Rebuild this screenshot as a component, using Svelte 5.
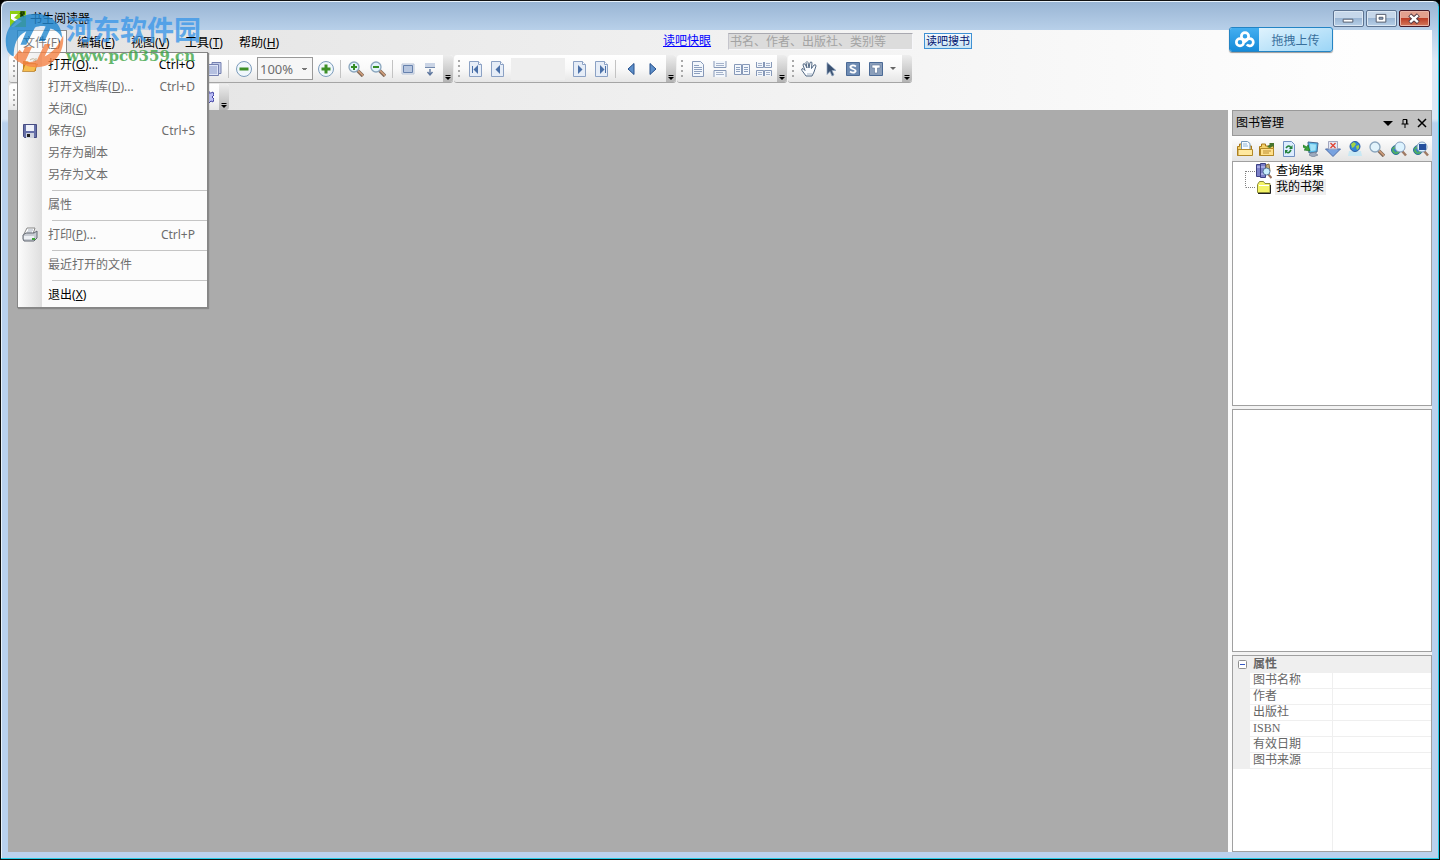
<script lang="ts">
  interface MenuEntry {
    text?: string;
    key?: string;
    tail?: string;
    shortcut?: string;
    icon?: string;
    enabled?: boolean;
    separator?: boolean;
  }

  const menus = [
    { text: "文件", key: "F" },
    { text: "编辑", key: "E" },
    { text: "视图", key: "V" },
    { text: "工具", key: "T" },
    { text: "帮助", key: "H" },
  ];

  const fileMenu: MenuEntry[] = [
    { text: "打开", key: "O", tail: "...", shortcut: "Ctrl+O", icon: "open", enabled: true },
    { text: "打开文档库", key: "D", tail: "...", shortcut: "Ctrl+D" },
    { text: "关闭", key: "C" },
    { text: "保存", key: "S", shortcut: "Ctrl+S", icon: "save" },
    { text: "另存为副本" },
    { text: "另存为文本" },
    { separator: true },
    { text: "属性" },
    { separator: true },
    { text: "打印", key: "P", tail: "...", shortcut: "Ctrl+P", icon: "print" },
    { separator: true },
    { text: "最近打开的文件" },
    { separator: true },
    { text: "退出", key: "X", enabled: true },
  ];

  const fileTools = ["open", "save", "print", "page", "page", "page", "page", "page"];
  const layoutTools = ["page", "continuous", "facing", "grid"];
  const panelTools = ["shelf", "newshelf", "refresh", "import", "download", "globe", "find", "findweb", "findlocal"];
  const fields = ["图书名称", "作者", "出版社", "ISBN", "有效日期", "图书来源"];

  let openMenu = $state("F");
  let expanded = $state(true);
  let keyword = $state("");
  let zoom = $state("100%");
  let page = $state("");
</script>

{#snippet label(item: { text?: string; key?: string; tail?: string })}
  {item.text}{#if item.key}(<u>{item.key}</u>){/if}{item.tail ?? ""}
{/snippet}

{#snippet icon(name: string)}
  <svg class="icon" viewBox="0 0 16 16" aria-hidden="true">
    {#if name === "open"}
      <path d="M1 4h5l1 2h7v8H1z" fill="#c98a25" />
      <path d="M3 7h12.5l-3 7.5H.5z" fill="#f6bd4f" stroke="#a86a12" stroke-width=".6" />
      <path d="M4 8h9" stroke="#fff0bd" />
      <path d="M8 3q4-3 6 1M14 1v3h-3" fill="none" stroke="#8c7442" />
    {:else if name === "save"}
      <path d="M1.5 1.5h13v13h-12l-1-1z" fill="#6670a8" stroke="#464c82" />
      <path d="M4 2h8v6H4z" fill="#eef1fa" />
      <path d="M4 10h8v5H4z" fill="#cdd2df" />
      <path d="M5 11h3v3H5z" fill="#222" />
    {:else if name === "print"}
      <path d="M5 1h8l-2 6H2z" fill="#fff" stroke="#888" />
      <path d="M6 3h5M5 5h5" stroke="#a5aebc" />
      <path d="M1 8l3-2h8l3-2v7l-3 3H2l-1-2z" fill="#c8ccd3" stroke="#626872" />
      <path d="M2 9h10v3H2z" fill="#edf0f4" />
      <path d="M10 11h3v2h-3z" fill="#3fa43a" />
    {:else if name === "copy"}
      <path d="M6 1.5h9v11H6z" fill="#c3cce8" stroke="#7580b0" />
      <path d="M1.5 3.5h11v11h-11z" fill="#dfe5f6" stroke="#7580b0" />
      <path d="M3 6h8M3 8h8M3 10h8M3 12h8" stroke="#8b9bca" />
    {:else if name === "minus" || name === "plus"}
      <circle cx="8" cy="8" r="7.5" fill="#f0f7fc" stroke="#7c9cbc" />
      <path d="M3.5 6.5h9v3h-9z" fill="#3d8f27" />
      {#if name === "plus"}<path d="M6.5 3.5h3v9h-3z" fill="#3d8f27" />{/if}
    {:else if name === "zoomin" || name === "zoomout" || name === "find"}
      <path d="M9 9l6 6" stroke="#826a59" stroke-width="3.5" />
      <path d="M9.5 9l5.5 5.500" stroke="#d4a07c" stroke-width="1.5" />
      <circle cx="6" cy="6" r="5" fill="#e2f3fb" stroke="#8ba6be" stroke-width="1.3" />
      {#if name !== "find"}<path d="M3 5h6v2H3z" fill="#358d26" />{/if}
      {#if name === "zoomin"}<path d="M5 3h2v6H5z" fill="#358d26" />{/if}
    {:else if name === "screen"}
      <path d="M2 3h12v10H2z" fill="#e5ebf4" stroke="#b8c3d6" />
      <path d="M3.5 4.500h9v7h-9z" fill="#b7c6df" stroke="#6681ad" />
    {:else if name === "fit"}
      <path d="M3 2h10v4H3z" fill="#cad4e5" />
      <path d="M3 6.500h10" stroke="#7188ac" />
      <path d="M8 8v6M5.500 11L8 14l2.500-3" fill="none" stroke="#5e779f" stroke-width="1.4" />
    {:else if name === "first" || name === "prev" || name === "next" || name === "last"}
      <path d="M2.500 .5h9l3 3v12h-12z" fill="#e6edf7" stroke="#8ba1c4" />
      <path d="M11.500 .5v3h3" fill="#fff" stroke="#8ba1c4" />
      {#if name === "first" || name === "prev"}
        <path d="M11 4v9L6.500 8.500z" fill="#4a70a8" />
      {:else}
        <path d="M7 4v9l4.500-4.500z" fill="#4a70a8" />
      {/if}
      {#if name === "first"}<path d="M5.500 5v7" stroke="#4a70a8" />{/if}
      {#if name === "last"}<path d="M12.500 5v7" stroke="#4a70a8" />{/if}
    {:else if name === "back"}
      <path d="M11 2.500v11L5 8z" fill="#5d8fc9" stroke="#26508d" />
    {:else if name === "forward"}
      <path d="M5 2.500v11L11 8z" fill="#5d8fc9" stroke="#26508d" />
    {:else if name === "page"}
      <path d="M2.500 .5h8l3 3v12h-11z" fill="#f3f7fc" stroke="#8799b8" />
      <path d="M4 4.500h5M4 6.500h8M4 8.500h8M4 10.500h8M4 12.500h6" stroke="#8da0bf" />
    {:else if name === "continuous"}
      <path d="M2 0v6.500h12V0M2 16V9.500h12V16" fill="#f3f7fc" stroke="#8799b8" />
      <path d="M4 2.500h8M4 4.500h8M4 11.500h7M4 13.500h8" stroke="#a4b2ca" />
    {:else if name === "facing"}
      <path d="M.5 3.500h7v10h-7zM8.500 3.500h7v10h-7z" fill="#f3f7fc" stroke="#8799b8" />
      <path d="M2 6.500h4M2 8.500h4M2 10.500h4M10 6.500h4M10 8.500h4M10 10.500h4" stroke="#8da0bf" />
    {:else if name === "grid"}
      <path d="M.5 1v5.500h7V1M8.500 1v5.500h7V1M.5 15V9.500h7V15M8.500 15V9.500h7V15" fill="#f3f7fc" stroke="#8799b8" />
      <path d="M2 2.500h4M2 4.500h4M10 2.500h4M10 4.500h4M2 11.500h4M2 13.500h4M10 11.500h4M10 13.500h4" stroke="#a4b2ca" />
    {:else if name === "hand"}
      <path d="M5 15L1 9.500q-1-2 1-2l2 2-2-5.500q0-2 2-1l2 4-1-5.500q1-2 2 0l1 5.500 1-5.500q1-1 2 0l-.5 6L13 4q2-1 2 1l-2 6-2 4z" fill="#fafcff" stroke="#526883" />
      <path d="M6 13h5" stroke="#a7b7c9" />
    {:else if name === "arrow"}
      <path d="M4 1.500v12l3-3 2 4.500 2-1-2-4.500h4z" fill="#3b5272" stroke="#8fa5c0" stroke-width=".7" />
    {:else if name === "select" || name === "textselect"}
      <path d="M1.500 1.500h13v13h-13z" fill={name === "select" ? "#6e8bb3" : "#8b9fbb"} stroke="#4b6a96" />
      {#if name === "select"}
        <path d="M11 5.500Q8 3.500 6 5t2 3 2 3-5-.5" fill="none" stroke="#fff" stroke-width="1.8" />
      {:else}
        <path d="M4 4h8v3h-2.500v5h-3V7H4z" fill="#fff" stroke="#5b7499" stroke-width=".6" />
      {/if}
    {:else if name === "gear"}
      <path d="M8 2h3v2h2l2-1 1 3-2 2 2 2-1 3-2-1-2 2H8z" fill="#babdf4" stroke="#4446a6" />
    {:else if name === "shelf" || name === "newshelf"}
      <path d="M.5 5.500h2V3h4v2h8v9.500H.5z" fill="#f4d169" stroke="#a97818" />
      {#if name === "shelf"}
        <path d="M4.500 .5h6l2.500 2V9H4.500z" fill="#f4faff" stroke="#7396b4" />
        <path d="M6 3h4M6 5h5" stroke="#91b6d6" />
        <path d="M1 8.500h14.500v6H1z" fill="#ffe9a0" stroke="#b38928" />
      {:else}
        <path d="M1.500 7.500h13v7h-13z" fill="#ffe08b" stroke="#b38928" />
        <path d="M8 6l3-3-1-1h5v5l-1-2-3 2z" fill="#46742c" />
        <path d="M4 10h8M4 12h6" stroke="#bb8d35" />
      {/if}
    {:else if name === "refresh"}
      <path d="M2.500 .5h8l3 3v12h-11z" fill="#dcecff" stroke="#708fc0" />
      <path d="M5 7q3-4 5 0M10 9q-3 5-5 1" fill="none" stroke="#25823b" stroke-width="1.6" />
      <path d="M11.500 4v4H8zM4 13V9h3z" fill="#25823b" />
    {:else if name === "import"}
      <path d="M5 1l10 1-1 9-8 1z" fill="#59b9e6" stroke="#466891" />
      <path d="M7 3l6 .5-.5 6-5 .5z" fill="#a2e3f8" />
      <path d="M8 12l5-1v2l2 1-5 2-4-2z" fill="#9daabe" stroke="#67758b" stroke-width=".6" />
      <path d="M0 4l4 2 1-2 2 6-6-1 2-1-3-2z" fill="#39a438" stroke="#176b1c" stroke-width=".6" />
    {:else if name === "download"}
      <path d="M4 .5h8V8h3.500L8 15.500.5 8H4z" fill="#78a2df" stroke="#4d6da8" />
      <path d="M3.500 .5h9V8h-9z" fill="#e4e8f5" stroke="#a4a6bd" />
      <path d="M5.500 2l5 5M10.500 2l-5 5" stroke="#e04230" stroke-width="1.3" />
    {:else if name === "globe"}
      <path d="M2 10h12l1 5H1z" fill="#c8e8f4" />
      <circle cx="8" cy="5.500" r="5" fill="#3286d4" stroke="#285aa0" />
      <path d="M4 3l3-2 2 2-2 3-2 1zM9 5l3-1v3l-2 2z" fill="#a4d445" />
    {:else if name === "findweb" || name === "findlocal"}
      <circle cx="5" cy="9" r="4.500" fill="#4db061" stroke="#2d6ca1" />
      <path d="M2 8h4l-1 4z" fill="#397fce" />
      <path d="M11 10l4 4.500" stroke="#9f7a64" stroke-width="2.500" />
      <circle cx="9" cy="6" r="5" fill="#dcf3ff" stroke="#839dbd" />
      {#if name === "findlocal"}<path d="M6 3h7v6H6z" fill="#244f9d" />{/if}
    {:else if name === "results"}
      <path d="M.5 1.500h4v12h-4zM4.500 .5h5v14h-5z" fill="#7b80c8" stroke="#3e4285" />
      <path d="M1 4h3M5 4h4M5 11h4" stroke="#d2d4ff" />
      <path d="M10 2l3-1 1 7-4 3z" fill="#c9b27b" stroke="#887347" />
      <path d="M12 11l3.500 4" stroke="#99715a" stroke-width="2" />
      <circle cx="10.500" cy="8.500" r="3.500" fill="#c9effd" stroke="#55779a" />
    {:else if name === "folder"}
      <path d="M1.500 5.500l2-3h4l1.500 2h5v9H1.500z" fill="#f4f468" stroke="#8b8b38" />
      <path d="M3 6.500h10" stroke="#fff" />
      <path d="M2 14.500h12.500V6" fill="none" stroke="#222" />
    {/if}
  </svg>
{/snippet}

{#snippet tool(name: string)}
  <button class="tool" aria-label={name}>{@render icon(name)}</button>
{/snippet}

{#snippet grip()}
  <span class="grip"><i></i><i></i><i></i><i></i></span>
{/snippet}

{#snippet overflow()}
  <button class="overflow" aria-label="more">
    <svg viewBox="0 0 8 8" aria-hidden="true"><path d="M1.500 2.500h5" stroke="#000" /><path d="M1 4h6L4 7z" fill="#000" /></svg>
  </button>
{/snippet}

<div class="window">
  <header class="titlebar">
    <svg class="app-icon" viewBox="0 0 16 16" aria-hidden="true">
      <path d="M0 0h16v16H0z" fill="#8fce13" />
      <path d="M1 3h7L4 7l8 3-8 6H1l5-5-5-3z" fill="#fff" />
      <path d="M11 6V1h3v2h-3l3 3" fill="none" stroke="#173800" stroke-width="1.5" />
    </svg>
    <h1>书生阅读器</h1>
    <div class="window-buttons">
      <button aria-label="最小化">
        <svg viewBox="0 0 30 16" aria-hidden="true"><path d="M9.500 8.500h10v3h-10z" fill="#fff" stroke="#535b6d" /></svg>
      </button>
      <button aria-label="还原">
        <svg viewBox="0 0 30 16" aria-hidden="true">
          <path d="M9.500 3.500h10v8h-10z" fill="#fff" stroke="#535b6d" />
          <path d="M12.500 6.500h4v2h-4z" fill="#8ca8ca" stroke="#535b6d" />
        </svg>
      </button>
      <button class="close" aria-label="关闭">
        <svg viewBox="0 0 30 16" aria-hidden="true">
          <path d="M10 4l9 8M19 4l-9 8" stroke="#563b45" stroke-width="4.500" />
          <path d="M10.500 4.500l8 7M18.500 4.500l-8 7" stroke="#fff" stroke-width="2.500" />
        </svg>
      </button>
    </div>
  </header>

  <div class="client">
    <div class="menubar">
      <nav class="menus">
        {#each menus as menu}
          <div class="menu">
            <button
              class="menu-title"
              class:open={openMenu === menu.key}
              onclick={() => (openMenu = openMenu === menu.key ? "" : menu.key)}
            >{@render label(menu)}</button>
            {#if menu.key === "F" && openMenu === "F"}
              <div class="dropdown">
                {#each fileMenu as item}
                  {#if item.separator}
                    <hr />
                  {:else}
                    <button class="entry" disabled={!item.enabled}>
                      <span class="entry-icon">{#if item.icon}{@render icon(item.icon)}{/if}</span>
                      <span class="entry-label">{@render label(item)}</span>
                      <span>{item.shortcut ?? ""}</span>
                    </button>
                  {/if}
                {/each}
              </div>
            {/if}
          </div>
        {/each}
      </nav>
      <form class="search" onsubmit={(e) => e.preventDefault()}>
        <a href="#duba">读吧快眼</a>
        <input type="text" bind:value={keyword} placeholder="书名、作者、出版社、类别等" aria-label="搜书" />
        <button>读吧搜书</button>
      </form>
    </div>

    <div class="toolrow">
      <div class="toolbar">
        {@render grip()}
        {#each fileTools as name}{@render tool(name)}{/each}
        <span class="divider"></span>
        {@render tool("copy")}
        <span class="divider"></span>
        {@render tool("minus")}
        <select class="zoom" bind:value={zoom} aria-label="缩放">
          <option>100%</option>
          <option>150%</option>
          <option>200%</option>
        </select>
        {@render tool("plus")}
        <span class="divider"></span>
        {@render tool("zoomin")}
        {@render tool("zoomout")}
        <span class="divider"></span>
        {@render tool("screen")}
        {@render tool("fit")}
        {@render overflow()}
      </div>
      <div class="toolbar">
        {@render grip()}
        {@render tool("first")}
        {@render tool("prev")}
        <input class="page-number" type="text" bind:value={page} aria-label="页码" />
        {@render tool("next")}
        {@render tool("last")}
        <span class="divider"></span>
        {@render tool("back")}
        {@render tool("forward")}
        {@render overflow()}
      </div>
      <div class="toolbar">
        {@render grip()}
        {#each layoutTools as name}{@render tool(name)}{/each}
        {@render overflow()}
      </div>
      <div class="toolbar">
        {@render grip()}
        {@render tool("hand")}
        {@render tool("arrow")}
        {@render tool("select")}
        <button class="tool split" aria-label="textselect">
          {@render icon("textselect")}
          <svg class="caret" viewBox="0 0 6 4" aria-hidden="true"><path d="M0 0h6L3 3z" fill="#666" /></svg>
        </button>
        {@render overflow()}
      </div>
    </div>

    <div class="toolrow">
      <div class="toolbar">
        {@render grip()}
        {#each fileTools as name}{@render tool(name)}{/each}
        {@render tool("gear")}
        {@render overflow()}
      </div>
    </div>

    <div class="workspace">
      <main></main>
      <aside>
        <div class="panel-head">
          <h2>图书管理</h2>
          <button aria-label="菜单"><svg viewBox="0 0 10 10" aria-hidden="true"><path d="M0 3h10L5 8z" fill="#000" /></svg></button>
          <button aria-label="固定">
            <svg viewBox="0 0 10 10" aria-hidden="true"><path d="M3 6V1.500h4V6M1.500 6h7M5 6v4M6.500 1v5" fill="none" stroke="#000" /></svg>
          </button>
          <button aria-label="关闭面板">
            <svg viewBox="0 0 10 10" aria-hidden="true"><path d="M1 1l8 8M9 1L1 9" stroke="#000" stroke-width="1.5" /></svg>
          </button>
        </div>
        <div class="panel-tools">
          {#each panelTools as name}{@render tool(name)}{/each}
        </div>
        <div class="box tree">
          <svg class="branches" viewBox="0 0 11 32" aria-hidden="true">
            <path d="M.5 8V24.500M1 8.500h10M1 24.500h10" fill="none" stroke="#808080" stroke-dasharray="1 1" />
          </svg>
          <ul>
            <li>{@render icon("results")}<span>查询结果</span></li>
            <li>{@render icon("folder")}<span class="selected">我的书架</span></li>
          </ul>
        </div>
        <div class="box"></div>
        <div class="box properties">
          <table>
            <colgroup>
              <col class="gutter-col" />
              <col class="name-col" />
              <col />
            </colgroup>
            <thead>
              <tr>
                <th class="gutter">
                  <button aria-label="折叠" onclick={() => (expanded = !expanded)}>
                    <svg viewBox="0 0 9 9" aria-hidden="true">
                      <rect x=".5" y=".5" width="8" height="8" rx="1" fill="#fff" stroke="#909090" />
                      <path d="M2 4.500h5" stroke="#3457c4" />
                    </svg>
                  </button>
                </th>
                <th colspan="2">属性</th>
              </tr>
            </thead>
            <tbody>
              {#if expanded}
                {#each fields as field}
                  <tr>
                    <td class="gutter"></td>
                    <td class="name">{field}</td>
                    <td class="value"></td>
                  </tr>
                {/each}
              {/if}
              <tr class="rest">
                <td colspan="2"></td>
                <td></td>
              </tr>
            </tbody>
          </table>
        </div>
      </aside>
    </div>
  </div>

  <button class="upload">
    <span class="upload-logo">
      <svg viewBox="0 0 22 18" aria-hidden="true">
        <g fill="none" stroke="#fff" stroke-width="3">
          <circle cx="11" cy="5.500" r="4" />
          <circle cx="5.500" cy="12" r="4" />
          <path d="M13 14.500a4 4 0 1 0 0-5L10 12" />
        </g>
      </svg>
    </span>
    <span class="upload-text">拖拽上传</span>
  </button>

  <div class="watermark">
    <svg viewBox="0 0 64 64" aria-hidden="true">
      <ellipse cx="31" cy="33" rx="26" ry="25" fill="#fff" opacity=".6" />
      <path d="M3 42C-3 20 14 4 34 5c15 1 26 11 26 25-3-6-8-9-12-10l-6 13h-6l7-15c-4-1-8 0-11 1l-9 18h-6l6-14C13 28 10 37 10 49c-3-1-6-4-7-7z" fill="#2288cf" />
      <path d="M61 27c2 17-9 33-28 33-8 0-14-2-18-6l7-15h7l-7 15c4 1 8 1 12-1l8-17h6l-6 13c9-5 15-12 19-22z" fill="#f58245" />
      <path d="M16 42l-6 8 5 5 5-9z" fill="#f58245" />
    </svg>
    <div>
      <strong>河东软件园</strong>
      <em>www.pc0359.cn</em>
    </div>
  </div>
</div>

<style>
  :global(body) {
    margin: 0;
    background: #000;
  }

  .window {
    position: relative;
    box-sizing: border-box;
    height: 100vh;
    padding: 0 7px 7px;
    display: flex;
    flex-direction: column;
    border: 1px solid #111;
    border-radius: 7px 7px 0 0;
    background: linear-gradient(#98b4d3, #b9d1ea 30px, #dce8f6 60px, #dce8f6 118px, #b9d1ee 122px);
    box-shadow: inset -1px -1px #23cce8, inset 1px 1px #e8f2fb;
    font: 12px/16px "Noto Sans", "Noto Sans CJK SC", sans-serif;
    color: #000;
  }

  button,
  input,
  select {
    box-sizing: border-box;
    margin: 0;
    padding: 0;
    border: 0;
    background: none;
    font: inherit;
    color: inherit;
  }

  svg {
    display: block;
  }

  .icon {
    width: 16px;
    height: 16px;
    flex: none;
  }

  h1,
  h2 {
    margin: 0;
    font-size: 12px;
    font-weight: 400;
  }

  .titlebar {
    height: 29px;
    flex: none;
    display: flex;
    align-items: center;
    gap: 4px;
    padding: 6px 2px 0;
    box-sizing: border-box;
  }

  .app-icon {
    width: 16px;
    height: 16px;
  }

  .window-buttons {
    margin-left: auto;
    display: flex;
    gap: 2px;
  }

  .window-buttons button {
    width: 31px;
    height: 17px;
    border: 1px solid #5d7391;
    border-radius: 2px;
    background: linear-gradient(#c6d7ea 45%, #9bb6d4 50%, #b8d0e8);
    box-shadow: inset 0 0 0 1px #dce8f4;
  }

  .window-buttons .close {
    border-color: #451827;
    background: linear-gradient(#e3a08e 45%, #bd3e27 50%, #d3795c);
    box-shadow: inset 0 0 0 1px #e9b4a7;
  }

  .client {
    flex: 1;
    min-height: 0;
    display: flex;
    flex-direction: column;
    background: linear-gradient(90deg, #e2e2e2, #fefefe 95%);
  }

  .menubar {
    height: 25px;
    flex: none;
    display: flex;
  }

  .menus {
    flex: 0 0 46%;
    box-sizing: border-box;
    display: flex;
    padding-left: 9px;
  }

  .menu {
    position: relative;
    min-width: 54px;
  }

  .menu-title {
    height: 24px;
    padding: 0 6px 0 5px;
    border: 1px solid transparent;
    border-bottom: 0;
    white-space: nowrap;
  }

  .menu-title.open {
    border-color: #8a8a8a;
    background: #fcfcfc;
  }

  .dropdown {
    position: absolute;
    z-index: 2;
    top: 22px;
    left: 0;
    width: 191px;
    box-sizing: border-box;
    padding: 1px 0;
    border: 1px solid #868686;
    background: linear-gradient(90deg, #fcfcfc, #dedede 24px, #fcfcfc 24px);
    box-shadow: 1px 1px 1px #888;
  }

  .entry {
    width: 100%;
    height: 22px;
    display: flex;
    align-items: center;
    padding-right: 12px;
    text-align: left;
  }

  .entry:disabled {
    color: #6d6d6d;
  }

  .entry-icon {
    width: 30px;
    padding-left: 4px;
    box-sizing: border-box;
  }

  .entry-label {
    flex: 1;
  }

  .dropdown hr {
    margin: 4px 0 3px 34px;
    border: 0;
    border-top: 1px solid #c5c5c5;
  }

  .search {
    display: flex;
    align-items: center;
    padding-bottom: 3px;
  }

  .search a {
    color: #00f;
  }

  .search input {
    width: 185px;
    height: 17px;
    margin: 0 11px 0 17px;
    padding-left: 1px;
    border: 1px solid #a9a9b0;
    border-color: #a9a9b0 #f7f7fa #f7f7fa #c5c5cc;
    background: #dcdcdc;
  }

  .search input::placeholder {
    color: #a3a3a3;
    opacity: 1;
  }

  .search button {
    width: 48px;
    height: 16px;
    border: 1px solid #3f91d4;
    background: linear-gradient(#f4fafe, #c7e4f5);
    font-size: 11px;
    line-height: 14px;
    color: #00126e;
  }

  .toolrow {
    height: 29px;
    flex: none;
    display: flex;
    gap: 1px;
    padding-left: 1px;
  }

  .toolrow + .toolrow {
    height: 26px;
  }

  .toolbar {
    height: 28px;
    box-sizing: border-box;
    display: flex;
    align-items: center;
    border-bottom: 1px solid #a5a5a5;
    border-radius: 3px;
    background: linear-gradient(#fff, #f9f9f9 50%, #e6e6e6);
  }

  .toolrow + .toolrow .toolbar {
    height: 26px;
    border-bottom: 0;
  }

  .grip {
    width: 10px;
    flex: none;
    display: flex;
    flex-direction: column;
    align-items: center;
    gap: 3px;
  }

  .grip i {
    width: 2px;
    height: 2px;
    background: #a8a8a8;
  }

  .tool {
    width: 22px;
    height: 22px;
    flex: none;
    display: flex;
    align-items: center;
    justify-content: center;
  }

  .split {
    width: 36px;
    gap: 6px;
  }

  .caret {
    width: 6px;
    height: 4px;
  }

  .divider {
    width: 1px;
    height: 18px;
    margin: 0 4px 0 3px;
    background: #c3c3c3;
  }

  .overflow {
    width: 10px;
    align-self: stretch;
    margin-left: 2px;
    padding: 0 1px 1px;
    display: flex;
    align-items: flex-end;
    border-radius: 0 3px 3px 0;
    background: linear-gradient(#ededed, #b4b4b4);
  }

  .overflow svg {
    width: 8px;
    height: 8px;
  }

  .zoom {
    width: 56px;
    height: 23px;
    margin: 0 2px;
    padding-left: 2px;
    appearance: none;
    border: 1px solid #999;
    background:
      linear-gradient(#777, #777) right 6px top 11px / 3px 1px no-repeat,
      linear-gradient(#777, #777) right 5px top 10px / 5px 1px no-repeat,
      #f6f6f6;
    font-size: 13px;
    color: #6d6d6d;
  }

  .page-number {
    width: 54px;
    height: 22px;
    margin: 0 3px;
    background: #eee;
  }

  .workspace {
    flex: 1;
    min-height: 0;
    display: flex;
    gap: 4px;
  }

  main {
    flex: 1;
    background: #ababab;
  }

  aside {
    width: 200px;
    display: flex;
    flex-direction: column;
    background: #f3f3f3;
  }

  .panel-head {
    height: 26px;
    box-sizing: border-box;
    display: flex;
    align-items: center;
    gap: 7px;
    padding: 0 4px 0 3px;
    border: 1px solid #999;
    background: #c2c2c2;
  }

  .panel-head h2 {
    flex: 1;
  }

  .panel-head svg {
    width: 10px;
    height: 10px;
  }

  .panel-tools {
    height: 25px;
    display: flex;
    align-items: center;
    padding-left: 2px;
    background: linear-gradient(#fff, #e4e4e4);
  }

  .box {
    flex: 1;
    box-sizing: border-box;
    border: 1px solid #a0a0a0;
    background: #fff;
  }

  .box + .box {
    margin-top: 3px;
  }

  .tree {
    display: flex;
    padding: 1px 0 0 12px;
  }

  .branches {
    width: 11px;
    height: 32px;
  }

  ul {
    margin: 0;
    padding: 0;
    list-style: none;
  }

  li {
    display: flex;
    gap: 3px;
  }

  li span {
    padding: 0 2px 0 1px;
  }

  .selected {
    background: #efefef;
  }

  .box.properties {
    flex: 0 0 197px;
    display: flex;
  }

  table {
    width: 100%;
    height: 100%;
    table-layout: fixed;
    border-collapse: separate;
    border-spacing: 0;
    line-height: 15px;
    font-family: "Liberation Serif", "Noto Sans CJK SC", serif;
    color: #666;
  }

  .gutter-col {
    width: 17px;
  }

  .name-col {
    width: 83px;
  }

  th,
  td {
    box-sizing: border-box;
    height: 16px;
    padding: 0;
    text-align: left;
  }

  th {
    height: 17px;
    background: #efefef;
  }

  .gutter {
    background: #efefef;
  }

  .gutter button {
    width: 9px;
    height: 9px;
    display: block;
    margin-left: 5px;
  }

  th:not(.gutter),
  .name {
    padding-left: 3px;
  }

  .name,
  .value {
    border-bottom: 1px solid #efefef;
  }

  .name,
  .rest td:first-child {
    border-right: 1px solid #efefef;
  }

  .rest td {
    height: auto;
  }

  .upload {
    position: absolute;
    top: 26px;
    right: 106px;
    width: 104px;
    height: 25px;
    display: flex;
    overflow: hidden;
    border: 1px solid #2484c4;
    border-radius: 3px;
    background: linear-gradient(160deg, #eef9ff, #9bd5f6);
    box-shadow: 0 1px 1px #999;
  }

  .upload-logo {
    width: 29px;
    height: 100%;
    display: grid;
    place-items: center;
    background: linear-gradient(#44aef0, #168bd9);
  }

  .upload-logo svg {
    width: 20px;
    height: 17px;
  }

  .upload-text {
    flex: 1;
    line-height: 25px;
    color: #386f9c;
  }

  .watermark {
    position: absolute;
    z-index: 3;
    top: 7px;
    left: 3px;
    display: flex;
    opacity: 0.8;
    pointer-events: none;
  }

  .watermark svg {
    width: 62px;
    height: 64px;
  }

  .watermark div {
    display: flex;
    flex-direction: column;
    padding-top: 8px;
  }

  .watermark strong {
    font-size: 27px;
    line-height: 28px;
    color: #3d98e8;
  }

  .watermark em {
    font: bold 15px/24px "DejaVu Serif", serif;
    color: #3fa648;
  }
</style>
